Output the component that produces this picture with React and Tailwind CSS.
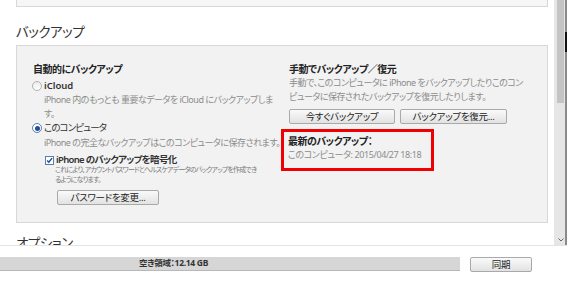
import React from "react";

function Btn({ children, className = "" }) {
  return (
    <div
      className={
        "flex h-[15px] shrink-0 items-center justify-center rounded-[2px] border border-[#a9a9a9] bg-gradient-to-b from-[#fafafa] to-[#e2e2e2] text-[9.5px] leading-none tracking-[-0.3px] text-[#222] " +
        className
      }
    >
      {children}
    </div>
  );
}

function Radio({ checked }) {
  return checked ? (
    <span className="flex h-[10px] w-[10px] shrink-0 items-center justify-center rounded-full border border-[#5a7fb0] bg-white">
      <span className="h-[5px] w-[5px] rounded-full bg-[#1d4f96]" />
    </span>
  ) : (
    <span className="block h-[10px] w-[10px] shrink-0 rounded-full border border-[#b0b0b0] bg-gradient-to-b from-[#ebebeb] to-white" />
  );
}

function Checkbox() {
  return (
    <span className="flex h-[9px] w-[9px] shrink-0 items-center justify-center border border-[#5b7fa8] bg-white">
      <svg width="9" height="9" viewBox="0 0 9 9">
        <path d="M1.5 4.5 L3.6 6.8 L7.8 1.5" fill="none" stroke="#1b4b9b" strokeWidth="1.8" />
      </svg>
    </span>
  );
}

export default function App() {
  return (
    <div className="h-[282px] w-[567px] overflow-hidden bg-white font-['Noto_Sans','Noto_Sans_CJK_JP',sans-serif] [font-feature-settings:'palt'_1]">
      <div className="flex h-[245px] overflow-hidden">
        <div className="min-w-0 flex-1 pl-[16px] pr-[6px]">
          <div className="h-[7px] border-x border-b border-[#d8d8d8] bg-[#f6f6f6]" />
          <div className="mt-[15px] h-[20px] text-[13.5px] leading-[20px] tracking-[-0.5px] text-[#333]">バックアップ</div>
          <div className="mt-[3px] flex h-[178px] border border-[#d8d8d8] bg-[#f2f2f2] pl-[16px] pt-[16px]">
            <div className="w-[256px] shrink-0">
              <div className="text-[10px] font-bold leading-[14px] tracking-[-0.5px] text-[#222]">自動的にバックアップ</div>
              <div className="mt-[3px] flex h-[14px] items-center">
                <span className="-ml-[1px]"><Radio /></span>
                <span className="ml-[2px] text-[9.5px] font-semibold leading-[14px] text-[#333]">iCloud</span>
              </div>
              <div className="whitespace-nowrap pl-[11px] text-[9px] leading-[14px] tracking-[-0.5px] text-[#8c8c8c]">
                iPhone 内のもっとも 重要なデータを iCloud にバックアップしま
                <br />
                す。
              </div>
              <div className="flex h-[14px] items-center">
                <span className="-ml-[1px]"><Radio checked /></span>
                <span className="ml-[2px] text-[9.5px] leading-[14px] tracking-[-0.9px] text-[#333]">このコンピュータ</span>
              </div>
              <div className="mt-[1px] whitespace-nowrap pl-[11px] text-[9px] leading-[14px] tracking-[-0.5px] text-[#8c8c8c]">
                iPhone の完全なバックアップはこのコンピュータに保存されます。
              </div>
              <div className="mt-[3px] flex h-[14px] items-center pl-[12px]">
                <Checkbox />
                <span className="ml-[2px] text-[9.5px] font-semibold leading-[14px] tracking-[-0.7px] text-[#333]">iPhone のバックアップを暗号化</span>
              </div>
              <div className="-mt-[2px] whitespace-nowrap pl-[22px] text-[7px] leading-[10px] tracking-[-0.85px] text-[#7a7a7a]">
                これにより、アカウントパスワードとヘルスケアデータのバックアップを作成でき
                <br />
                るようになります。
              </div>
              <div className="mt-[5px] pl-[24px]">
                <Btn className="w-[102px]">パスワードを変更...</Btn>
              </div>
            </div>
            <div className="min-w-0 flex-1">
              <div className="text-[10px] font-bold leading-[14px] tracking-[-0.5px] text-[#222]">手動でバックアップ／復元</div>
              <div className="whitespace-nowrap text-[9px] leading-[14px] tracking-[-0.5px] text-[#8c8c8c]">
                手動で、このコンピュータに iPhone をバックアップしたりこのコン
                <br />
                ピュータに保存されたバックアップを復元したりします。
              </div>
              <div className="mt-[5px] flex gap-[5px]">
                <Btn className="w-[106px]">今すぐバックアップ</Btn>
                <Btn className="w-[107px]">バックアップを復元...</Btn>
              </div>
              <div className="-ml-[8px] mt-[5px] h-[42px] w-[153px] border-[3px] border-[#f00000] pl-[4px] pt-[2px]">
                <div className="text-[10px] font-bold leading-[14px] tracking-[-0.5px] text-[#222]">最新のバックアップ：</div>
                <div className="whitespace-nowrap text-[9px] leading-[13px] tracking-[-0.4px] text-[#8c8c8c]">このコンピュータ: 2015/04/27 18:18</div>
              </div>
            </div>
          </div>
          <div className="mt-[10px] h-[20px] text-[13.5px] leading-[20px] tracking-[-0.5px] text-[#333]">オプション</div>
        </div>
        <div className="relative flex w-[13px] shrink-0 bg-[#e6e6e6]">
          <div className="ml-[3px] h-[103px] w-[7px] bg-[#c4c4c4]" />
          <div className="absolute bottom-[3px] left-[4px]">
            <svg width="6" height="4" viewBox="0 0 6 4">
              <path d="M0.5 0.5 L3 3 L5.5 0.5" fill="none" stroke="#666" strokeWidth="1" />
            </svg>
          </div>
          <div className="ml-auto flex w-[2px] flex-col bg-[#8a8a8a]">
            <div className="mt-[32px] h-[20px] bg-[#111]" />
          </div>
        </div>
      </div>
      <div className="flex h-[37px] items-start border-t border-[#e4e4e4] pt-[11px]">
        <div className="flex h-[14px] w-[460px] shrink-0 items-center border-b border-[#b8b8b8] bg-[#d6d6d6] pl-[139px]">
          <span className="text-[8.5px] font-bold leading-none tracking-[-0.3px] text-[#333]">空き領域：12.14 GB</span>
        </div>
        <Btn className="ml-[10px] w-[62px]">同期</Btn>
      </div>
    </div>
  );
}
